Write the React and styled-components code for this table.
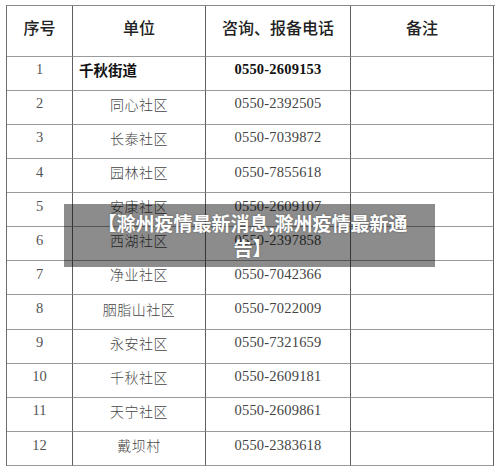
import React from "react";
import styled, { createGlobalStyle } from "styled-components";

const GlobalStyle = createGlobalStyle`
  html, body {
    margin: 0;
    padding: 0;
    background: #fff;
  }
`;

const rows = [
  { no: "1", unit: "千秋街道", phone: "0550-2609153", strong: true },
  { no: "2", unit: "同心社区", phone: "0550-2392505" },
  { no: "3", unit: "长泰社区", phone: "0550-7039872" },
  { no: "4", unit: "园林社区", phone: "0550-7855618" },
  { no: "5", unit: "安康社区", phone: "0550-2609107" },
  { no: "6", unit: "西湖社区", phone: "0550-2397858" },
  { no: "7", unit: "净业社区", phone: "0550-7042366" },
  { no: "8", unit: "胭脂山社区", phone: "0550-7022009" },
  { no: "9", unit: "永安社区", phone: "0550-7321659" },
  { no: "10", unit: "千秋社区", phone: "0550-2609181" },
  { no: "11", unit: "天宁社区", phone: "0550-2609861" },
  { no: "12", unit: "戴坝村", phone: "0550-2383618" },
];

const Page = styled.div`
  position: relative;
  width: 500px;
  height: 472px;
  overflow: hidden;
  background: #fff;
  padding: 5px 0 0 6px;
  box-sizing: border-box;
`;

const Table = styled.div`
  display: grid;
  grid-template-columns: 66px 133px 145px 143px;
  grid-template-rows: 50.6px repeat(12, 34.13px);
  width: 488px;
  border-top: 1px solid #8a8a8a;
  border-left: 1px solid #6e6e6e;
`;

const Cell = styled.div`
  box-sizing: border-box;
  display: flex;
  align-items: center;
  justify-content: ${(p) => (p.$left ? "flex-start" : "center")};
  padding: ${(p) => (p.$left ? "0 0 7px 6px" : "0 0 7px 0")};
  border-right: 1px solid #5f5f5f;
  border-bottom: 1px solid #9a9a9a;
  color: #3a3a3a;
  font-size: 14px;
  white-space: nowrap;
`;

const HeadCell = styled(Cell)`
  font-family: "Noto Sans CJK SC", "Noto Sans", sans-serif;
  font-size: 16px;
  font-weight: 500;
  color: #222;
  padding-bottom: 7px;
`;

const NumCell = styled(Cell)`
  font-family: "Liberation Serif", "DejaVu Serif", serif;
  font-size: 14.5px;
  color: #555;
`;

const UnitCell = styled(Cell)`
  font-family: "Noto Sans CJK SC", sans-serif;
  font-size: ${(p) => (p.$strong ? "14.5px" : "14px")};
  font-weight: ${(p) => (p.$strong ? 700 : 300)};
  color: ${(p) => (p.$strong ? "#111" : "#444")};
  letter-spacing: ${(p) => (p.$strong ? "0" : "0.5px")};
`;

const PhoneCell = styled(Cell)`
  font-family: "Liberation Serif", "DejaVu Serif", serif;
  font-size: 14.5px;
  font-weight: ${(p) => (p.$strong ? 700 : 400)};
  color: ${(p) => (p.$strong ? "#111" : "#444")};
  letter-spacing: 0.2px;
`;

const Caption = styled.div`
  position: absolute;
  left: 64px;
  top: 204px;
  width: 371px;
  height: 63px;
  box-sizing: border-box;
  padding: 6px 14px 0 20px;
  background: rgba(0, 0, 0, 0.45);
  color: #fff;
  font-family: "Noto Sans CJK SC", "Noto Sans", sans-serif;
  font-size: 19px;
  font-weight: 700;
  line-height: 25px;
  text-align: center;
  text-shadow: 0 0 2px rgba(0, 0, 0, 0.35);
`;

export default function App() {
  return (
    <>
      <GlobalStyle />
      <Page>
        <Table>
          <HeadCell>序号</HeadCell>
          <HeadCell>单位</HeadCell>
          <HeadCell>咨询、报备电话</HeadCell>
          <HeadCell>备注</HeadCell>
          {rows.map((r) => (
            <React.Fragment key={r.no}>
              <NumCell>{r.no}</NumCell>
              <UnitCell $strong={r.strong} $left={r.strong}>
                {r.unit}
              </UnitCell>
              <PhoneCell $strong={r.strong}>{r.phone}</PhoneCell>
              <Cell />
            </React.Fragment>
          ))}
        </Table>
        <Caption>【滁州疫情最新消息,滁州疫情最新通告】</Caption>
      </Page>
    </>
  );
}
